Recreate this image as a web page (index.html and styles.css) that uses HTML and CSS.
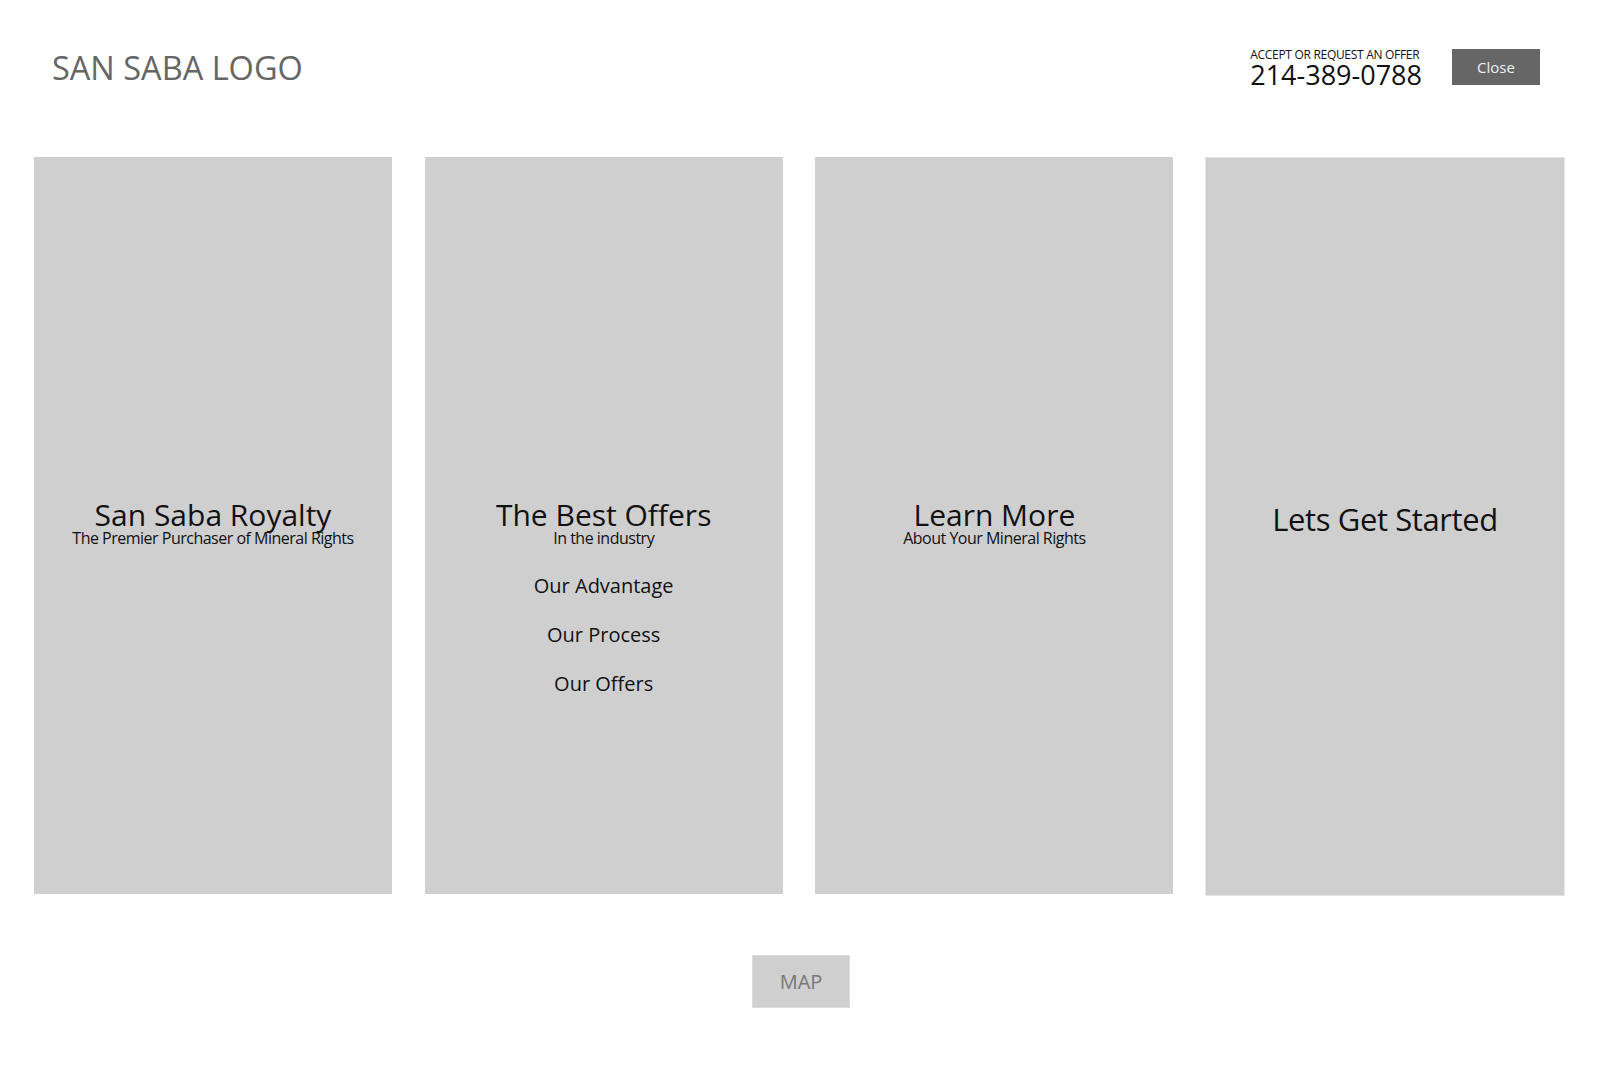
FILE: index.html
```html
<!DOCTYPE html>
<html lang="en">
<head>
<meta charset="utf-8">
<title>San Saba Royalty</title>
<link rel="stylesheet" href="styles.css">
</head>
<body>
<header class="header">
  <div class="logo">SAN SABA LOGO</div>
  <div class="header-right">
    <div class="contact">
      <div class="contact-label">ACCEPT OR REQUEST AN OFFER</div>
      <div class="contact-phone">214-389-0788</div>
    </div>
    <button class="close-btn">Close</button>
  </div>
</header>
<main class="panels">
  <section class="panel">
    <h2 class="panel-title">San Saba Royalty</h2>
    <p class="panel-sub">The Premier Purchaser of Mineral Rights</p>
  </section>
  <section class="panel">
    <h2 class="panel-title">The Best Offers</h2>
    <p class="panel-sub">In the industry</p>
    <ul class="panel-links">
      <li>Our Advantage</li>
      <li>Our Process</li>
      <li>Our Offers</li>
    </ul>
  </section>
  <section class="panel">
    <h2 class="panel-title">Learn More</h2>
    <p class="panel-sub">About Your Mineral Rights</p>
  </section>
  <section class="panel panel-last">
    <h2 class="panel-title panel-title-solo">Lets Get Started</h2>
  </section>
</main>
<div class="map-row">
  <button class="map-btn">MAP</button>
</div>
</body>
</html>
```
FILE: styles.css
```css
* { box-sizing: border-box; }

body {
  margin: 0;
  background: #ffffff;
  font-family: "Open Sans", "Noto Sans", sans-serif;
  color: #111111;
}

.header {
  height: 134px;
  display: flex;
  align-items: center;
  justify-content: space-between;
  padding: 0 60px 0 52px;
}

.logo {
  font-size: 32.5px;
  line-height: 1;
  color: #666666;
  margin-top: 3px;
}

.header-right {
  display: flex;
  align-items: center;
  gap: 30px;
}

.contact {
  display: flex;
  flex-direction: column;
  color: #111111;
  margin-top: 2px;
}

.contact-label {
  font-size: 12px;
  line-height: 12px;
  letter-spacing: -0.3px;
}

.contact-phone {
  font-size: 27px;
  line-height: 24px;
  margin-top: 2px;
}

.close-btn {
  width: 88px;
  height: 36px;
  border: none;
  background: #666666;
  color: #f0f0f0;
  font-family: "Open Sans", "Noto Sans", sans-serif;
  font-size: 15px;
  padding: 0;
  margin-top: -1px;
}

.panels {
  margin-top: 23px;
  display: grid;
  grid-template-columns: repeat(4, 358px);
  column-gap: 32.7px;
  padding: 0 34px 0 34px;
}

.panel {
  height: 737px;
  background: #cfcfcf;
  display: flex;
  flex-direction: column;
  align-items: center;
  padding-top: 343px;
  text-align: center;
}

.panel-last {
  margin-top: 1px;
  outline: 1px solid #e6e6e6;
}

.panel-title {
  margin: 0;
  font-weight: 400;
  font-size: 30px;
  line-height: 30px;
  color: #111111;
}

.panel-title-solo {
  font-size: 31px;
  letter-spacing: -0.4px;
  margin-top: 3px;
}

.panel-sub {
  margin: 0;
  font-size: 16px;
  line-height: 16px;
  letter-spacing: -0.5px;
  color: #111111;
}

.panel-links {
  list-style: none;
  margin: 30px 0 0;
  padding: 0;
  display: flex;
  flex-direction: column;
  gap: 29px;
}

.panel-links li {
  font-size: 20px;
  line-height: 20px;
  color: #111111;
}

.map-row {
  display: flex;
  justify-content: center;
  padding-top: 60px;
}

.map-btn {
  width: 98px;
  height: 53px;
  background: #cfcfcf;
  border: 1px solid #dcdcdc;
  color: #777777;
  font-family: "Open Sans", "Noto Sans", sans-serif;
  font-size: 20px;
  padding: 0;
  margin-left: 2px;
}
```
